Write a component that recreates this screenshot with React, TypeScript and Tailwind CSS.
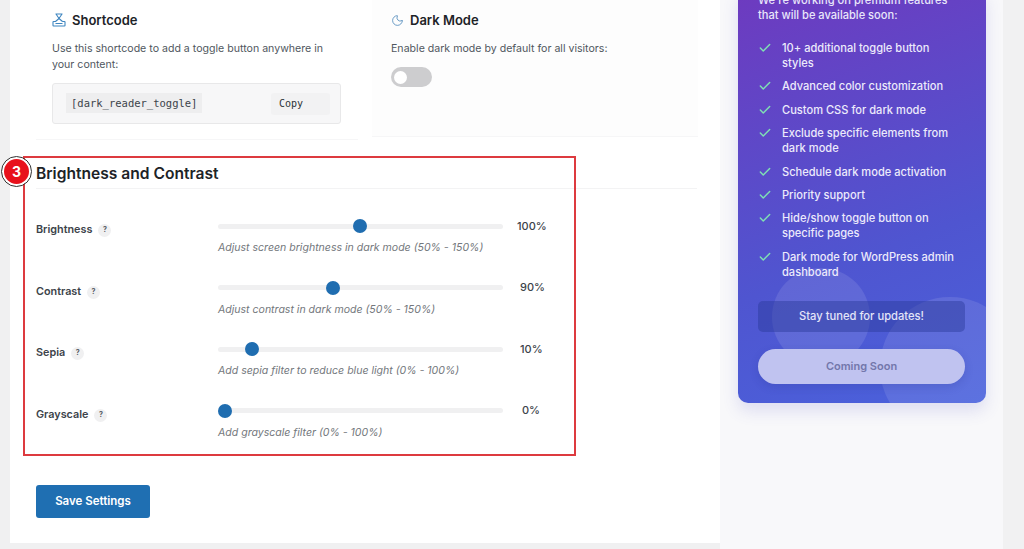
import { Check, Moon } from "lucide-react";

const sliders = [
  { label: "Brightness", value: "100%", pos: 142, hint: "Adjust screen brightness in dark mode (50% - 150%)", valueClass: "ml-[14px]" },
  { label: "Contrast", value: "90%", pos: 115, hint: "Adjust contrast in dark mode (50% - 150%)", valueClass: "ml-[17px]" },
  { label: "Sepia", value: "10%", pos: 34, hint: "Add sepia filter to reduce blue light (0% - 100%)", valueClass: "ml-[17px]" },
  { label: "Grayscale", value: "0%", pos: 7, hint: "Add grayscale filter (0% - 100%)", valueClass: "ml-[19px]" },
];

const features = [
  "10+ additional toggle button styles",
  "Advanced color customization",
  "Custom CSS for dark mode",
  "Exclude specific elements from dark mode",
  "Schedule dark mode activation",
  "Priority support",
  "Hide/show toggle button on specific pages",
  "Dark mode for WordPress admin dashboard",
];

function ShortcodeIcon() {
  return (
    <svg width="14" height="14" viewBox="0 0 14 14" fill="none" stroke="#3f86c0" strokeWidth="1.1" strokeLinejoin="round">
      <path d="M3.5 1h7M4 1l3 4.5L10 1" />
      <path d="M3.5 8.5H1.5a.5.5 0 0 0-.5.5v3.5a.5.5 0 0 0 .5.5h11a.5.5 0 0 0 .5-.5V9a.5.5 0 0 0-.5-.5h-2M3.5 8.5 7 5.5l3.5 3M3.5 10.5h7" />
    </svg>
  );
}

function SliderRow({ item }: { item: (typeof sliders)[number] }) {
  return (
    <div className="flex h-[61.5px]">
      <div className="w-[182px] pt-[10px] flex items-start gap-[6px]">
        <span className="text-[10.8px] leading-[14px] font-semibold text-[#3c434a]">{item.label}</span>
        <span className="mt-[1px] w-[13px] h-[13px] rounded-full bg-[#f0f0f1] flex items-center justify-center text-[7px] font-bold text-[#50575e]">?</span>
      </div>
      <div>
        <div className="flex items-center h-[14px] mt-[6px]">
          <div className="relative w-[285px] h-[5px] rounded-full bg-[#f0f0f1]">
            <span
              className="absolute top-[-4.5px] w-[14px] h-[14px] -ml-[7px] rounded-full bg-[#1f6db0]"
              style={{ left: item.pos }}
            />
          </div>
          <span className={`${item.valueClass} text-[11px] font-medium text-[#3c434a]`}>{item.value}</span>
        </div>
        <p className="mt-[8px] text-[10.55px] leading-[14px] italic text-[#73777c]">{item.hint}</p>
      </div>
    </div>
  );
}

export default function App() {
  return (
    <div className="relative h-[549px] overflow-hidden flex bg-[#f0f0f1] pl-[10px] font-['Inter',sans-serif]">
      <main className="w-[710px] h-[543px] shrink-0 bg-white pl-[26px]">
        <div className="flex gap-[14px] h-[140px]">
          <section className="w-[322px] shrink-0 h-[140px] pl-[16px] pr-[17px] pt-[11px] border-b border-[#f6f6f7]">
            <h3 className="flex items-center gap-[6px] text-[13px] leading-[18px] font-semibold text-[#1d2327]">
              <ShortcodeIcon />
              Shortcode
            </h3>
            <p className="mt-[12px] text-[10.6px] leading-[16px] text-[#50575e]">
              Use this shortcode to add a toggle button anywhere in your content:
            </p>
            <div className="mt-[10px] h-[41px] flex items-start justify-between rounded-[3px] border border-[#e8e8e9] bg-[#f7f7f8] pl-[13px] pr-[10px] pt-[9px]">
              <code className="h-[20px] px-[5px] bg-[#eeeeef] text-[10.5px] leading-[20px] font-['DejaVu_Sans_Mono',monospace] text-[#3c434a]">
                [dark_reader_toggle]
              </code>
              <span className="w-[59px] h-[22px] pl-[8px] rounded-[3px] bg-[#f2f2f3] text-[10px] leading-[22px] font-['DejaVu_Sans_Mono',monospace] text-[#2c3338]">
                Copy
              </span>
            </div>
          </section>
          <section className="w-[326px] shrink-0 h-[137px] pl-[19px] pt-[11px] bg-[#fdfdfd] border-b border-[#f6f6f7]">
            <h3 className="flex items-center gap-[6px] text-[13px] leading-[18px] font-semibold text-[#1d2327]">
              <Moon size={13} strokeWidth={1.4} color="#3f7fb5" />
              Dark Mode
            </h3>
            <p className="mt-[12px] text-[10.6px] leading-[16px] text-[#50575e]">
              Enable dark mode by default for all visitors:
            </p>
            <div className="mt-[10px] w-[41px] h-[20px] rounded-full bg-[#cdcdcf] flex items-center pl-[3px]">
              <span className="w-[13px] h-[13px] rounded-full bg-white" />
            </div>
          </section>
        </div>
        <h2 className="mt-[24px] pb-[4px] text-[15.6px] leading-[20px] font-semibold text-[#1d2327] border-b border-[#f3f3f4] w-[661px]">
          Brightness and Contrast
        </h2>
        <div className="mt-[24px]">
          {sliders.map((item) => (
            <SliderRow key={item.label} item={item} />
          ))}
        </div>
        <button className="mt-[26px] w-[114px] h-[33px] rounded-[3px] bg-[#1f6fb2] text-white text-[11.5px] font-semibold">
          Save Settings
        </button>
      </main>

      <aside className="w-[283px] shrink-0 h-[549px] bg-[#f8f8fa] pl-[18px]">
        <div className="relative overflow-hidden -mt-[12px] w-[248px] h-[415px] rounded-[10px] bg-[linear-gradient(160deg,#6e3abf,#4f55d0_62%,#4a62dc)] px-[20px] pt-[5px] shadow-[0_8px_16px_rgba(90,90,200,0.16)]">
          <span className="absolute left-[34px] top-[280px] w-[98px] h-[98px] rounded-full bg-white/10" />
          <span className="absolute left-[142px] top-[309px] w-[140px] h-[140px] rounded-full bg-white/10" />
          <div className="relative">
            <p className="text-[11.1px] leading-[15px] font-medium text-[#e8e6fa]">
              We're working on premium features that will be available soon:
            </p>
            <ul className="mt-[18px] flex flex-col gap-[8.4px]">
              {features.map((f) => (
                <li key={f} className="flex gap-[10px] text-[11.1px] leading-[15px] font-medium text-[#eceafb]">
                  <Check size={14} strokeWidth={2.5} color="#7fe0b4" className="shrink-0 w-[14px] h-[14px]" />
                  <span className="w-[176px]">{f}</span>
                </li>
              ))}
            </ul>
            <div className="mt-[21px] w-[207px] h-[31px] rounded-[5px] bg-[#2a3a9a]/45 flex items-center justify-center text-[11.2px] font-medium text-[#e3e4f8]">
              Stay tuned for updates!
            </div>
            <div className="mt-[17px] w-[207px] h-[35px] rounded-full bg-[#c0c3f0] shadow-[0_3px_8px_rgba(40,50,140,0.2)] flex items-center justify-center text-[11px] font-semibold text-[#7377ab]">
              Coming Soon
            </div>
          </div>
        </div>
      </aside>
      <div className="flex-1 bg-[#f1f1f2]" />

      <div className="absolute left-[23px] top-[156px] w-[553px] h-[300px] border-2 border-[#dd3a3f] pointer-events-none" />
      <div className="absolute left-[2px] top-[157px] w-[29px] h-[29px] rounded-full bg-[#e8111c] border-2 border-white outline outline-1 outline-[#333] flex items-center justify-center text-white text-[14px] font-bold">
        3
      </div>
    </div>
  );
}
